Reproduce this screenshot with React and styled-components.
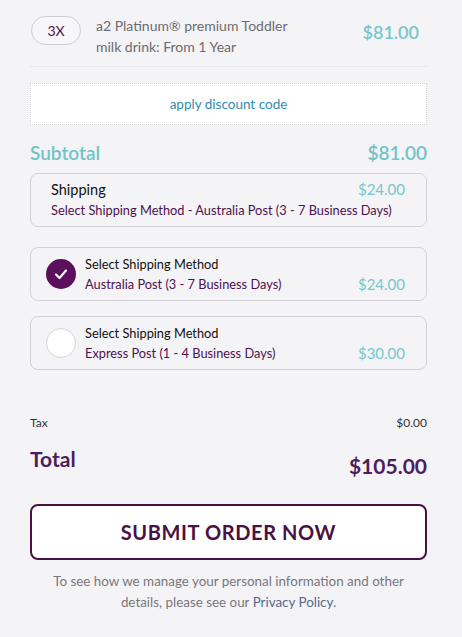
import React from "react";
import styled, { createGlobalStyle } from "styled-components";

const Global = createGlobalStyle`
  html, body { margin: 0; padding: 0; background: #f4f3f6; }
  body { font-family: Lato, "Open Sans", sans-serif; }
`;

const Page = styled.div`
  width: 462px;
  height: 637px;
  box-sizing: border-box;
  padding: 16px 35px 0 30px;
  background: #f4f3f6;
`;

const ItemRow = styled.div`
  display: flex;
  align-items: flex-start;
  padding-bottom: 9px;
  border-bottom: 1px solid #e8e7ea;
`;

const Qty = styled.div`
  width: 50px;
  height: 29px;
  box-sizing: border-box;
  border: 1px solid #cfcdd2;
  border-radius: 15px;
  background: #f7f6f8;
  display: flex;
  align-items: center;
  justify-content: center;
  font-size: 14px;
  color: #4b1346;
  margin-left: 1px;
`;

const ItemName = styled.div`
  margin-left: 15px;
  width: 220px;
  font-size: 14px;
  line-height: 21px;
  color: #6e6b70;
  margin-top: -1px;
`;

const ItemPrice = styled.div`
  margin-left: auto;
  margin-right: 8px;
  margin-top: 5px;
  font-size: 18px;
  font-weight: 600;
  color: #74c7cc;
`;

const Discount = styled.div`
  margin-top: 16px;
  height: 42px;
  box-sizing: border-box;
  background: #ffffff;
  border: 1px dotted #d6d5d8;
  display: flex;
  align-items: center;
  justify-content: center;
  font-size: 13.5px;
  color: #2f8bb3;
`;

const SummaryRow = styled.div`
  display: flex;
  justify-content: space-between;
  align-items: ${(p) => p.$align || "center"};
  margin-top: ${(p) => p.$mt || 0}px;
  color: ${(p) => p.$color};
  font-size: ${(p) => p.$size}px;
  font-weight: ${(p) => p.$weight || 400};
`;

const TotalLabel = styled.span`
  margin-bottom: 7px;
`;

const Box = styled.div`
  margin-top: ${(p) => p.$mt}px;
  height: 54px;
  box-sizing: border-box;
  border: 1px solid #d3d1d6;
  border-radius: 8px;
  display: flex;
  align-items: center;
  padding: 0 21px 0 ${(p) => p.$pl}px;
`;

const Lines = styled.div`
  flex: 1;
  display: flex;
  flex-direction: column;
`;

const TopLine = styled.div`
  display: flex;
  justify-content: space-between;
  align-items: baseline;
`;

const Label = styled.div`
  color: #111;
  font-size: ${(p) => p.$size}px;
  line-height: 20px;
`;

const Method = styled.div`
  color: #4e1150;
  font-size: 12.8px;
  line-height: 20px;
`;

const Price = styled.div`
  color: #76c8cd;
  font-size: 15px;
`;

const Radio = styled.div`
  width: 30px;
  height: 30px;
  border-radius: 50%;
  box-sizing: border-box;
  flex-shrink: 0;
  margin-right: 9px;
  display: flex;
  align-items: center;
  justify-content: center;
  background: ${(p) => (p.$on ? "#5b0f5c" : "#ffffff")};
  border: ${(p) => (p.$on ? "none" : "1px solid #d6d4d8")};
`;

const OptionBody = styled.div`
  flex: 1;
  display: flex;
  justify-content: space-between;
  align-items: flex-end;
`;

const OptionPrice = styled(Price)`
  margin-bottom: 1px;
`;

const Submit = styled.button`
  display: flex;
  width: 100%;
  margin-top: 26px;
  height: 56px;
  align-items: center;
  justify-content: center;
  background: #ffffff;
  border: 2px solid #4a1143;
  border-radius: 8px;
  font-family: inherit;
  font-size: 20px;
  font-weight: 700;
  letter-spacing: 0.6px;
  color: #4a1143;
`;

const Note = styled.p`
  margin: 11px 0 0;
  text-align: center;
  font-size: 13.4px;
  line-height: 21px;
  color: #7a777c;
  padding: 0 22px;
`;

const Link = styled.a`
  color: #506a90;
  text-decoration: none;
`;

function Check() {
  return (
    <svg width="16" height="16" viewBox="0 0 16 16">
      <path d="M3 8.5 L6.5 12 L13 4.5" fill="none" stroke="#fff" strokeWidth="2.2" strokeLinecap="round" strokeLinejoin="round" />
    </svg>
  );
}

function Option({ on, method, price, mt }) {
  return (
    <Box $mt={mt} $pl={15}>
      <Radio $on={on}>{on && <Check />}</Radio>
      <OptionBody>
        <div>
          <Label $size={12.8}>Select Shipping Method</Label>
          <Method>{method}</Method>
        </div>
        <OptionPrice>{price}</OptionPrice>
      </OptionBody>
    </Box>
  );
}

export default function App() {
  return (
    <Page>
      <Global />
      <ItemRow>
        <Qty>3X</Qty>
        <ItemName>a2 Platinum® premium Toddler milk drink: From 1 Year</ItemName>
        <ItemPrice>$81.00</ItemPrice>
      </ItemRow>
      <Discount>apply discount code</Discount>
      <SummaryRow $mt={16} $color="#72c3c9" $size={19} $weight={600}>
        <span>Subtotal</span>
        <span>$81.00</span>
      </SummaryRow>
      <Box $mt={9} $pl={20}>
        <Lines>
          <TopLine>
            <Label $size={14.5}>Shipping</Label>
            <Price>$24.00</Price>
          </TopLine>
          <Method>Select Shipping Method - Australia Post (3 - 7 Business Days)</Method>
        </Lines>
      </Box>
      <Option mt={20} on method="Australia Post (3 - 7 Business Days)" price="$24.00" />
      <Option mt={15} method="Express Post (1 - 4 Business Days)" price="$30.00" />
      <SummaryRow $mt={45} $color="#333" $size={12}>
        <span>Tax</span>
        <span>$0.00</span>
      </SummaryRow>
      <SummaryRow $mt={16} $align="flex-end" $color="#4e1d5a" $size={21} $weight={700}>
        <TotalLabel>Total</TotalLabel>
        <span>$105.00</span>
      </SummaryRow>
      <Submit>SUBMIT ORDER NOW</Submit>
      <Note>
        To see how we manage your personal information and other details, please see our{" "}
        <Link href="#">Privacy Policy</Link>.
      </Note>
    </Page>
  );
}
